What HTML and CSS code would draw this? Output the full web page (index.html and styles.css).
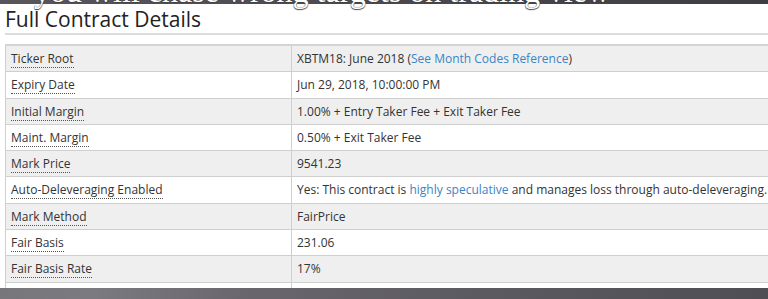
FILE: index.html
```html
<!DOCTYPE html>
<html lang="en">
<head>
    <meta charset="UTF-8">
    <meta name="viewport" content="width=device-width, initial-scale=1.0">
    <title>Full Contract Details</title>
    <link rel="stylesheet" href="styles.css">
</head>
<body>

<div class="banner">
    <span class="banner-text">you will chase wrong targets on trading view</span>
</div>

<div class="content">
    <h2 class="section-title">Full Contract Details</h2>

    <table class="details">
        <tr>
            <td class="key"><span class="hint">Ticker Root</span></td>
            <td>XBTM18: June 2018 (<a href="#">See Month Codes Reference</a>)</td>
        </tr>
        <tr>
            <td class="key"><span class="hint">Expiry Date</span></td>
            <td>Jun 29, 2018, 10:00:00 PM</td>
        </tr>
        <tr>
            <td class="key"><span class="hint">Initial Margin</span></td>
            <td>1.00% + Entry Taker Fee + Exit Taker Fee</td>
        </tr>
        <tr>
            <td class="key"><span class="hint">Maint. Margin</span></td>
            <td>0.50% + Exit Taker Fee</td>
        </tr>
        <tr>
            <td class="key"><span class="hint">Mark Price</span></td>
            <td>9541.23</td>
        </tr>
        <tr>
            <td class="key"><span class="hint">Auto-Deleveraging Enabled</span></td>
            <td>Yes: This contract is <a href="#">highly speculative</a> and manages loss through auto-deleveraging.</td>
        </tr>
        <tr>
            <td class="key"><span class="hint">Mark Method</span></td>
            <td>FairPrice</td>
        </tr>
        <tr>
            <td class="key"><span class="hint">Fair Basis</span></td>
            <td>231.06</td>
        </tr>
        <tr>
            <td class="key"><span class="hint">Fair Basis Rate</span></td>
            <td>17%</td>
        </tr>
        <tr>
            <td class="key"><span class="hint">Fair Basis Calculation</span></td>
            <td>Based on 30-day annualised rate</td>
        </tr>
    </table>
</div>

<div class="footer-bar"></div>

</body>
</html>
```

FILE: styles.css
```css
html, body {
    margin: 0;
    padding: 0;
    overflow: hidden;
    background-color: #fff;
}
body {
    font-family: "Open Sans", Arial, sans-serif;
    color: #333;
}
.banner {
    display: flow-root;
    height: 4px;
    background: linear-gradient(to right, #58565c, #3e3d42);
    position: relative;
    z-index: 2;
}
.banner-text {
    display: block;
    margin-top: -25px;
    padding-left: 34px;
    font-family: "Liberation Serif", serif;
    font-size: 32px;
    line-height: 32px;
    color: #fff;
    white-space: nowrap;
    text-shadow: 0 0 1px #444, 0 1px 1px #444;
}
.content {
    padding-left: 5px;
}
.section-title {
    margin: 0;
    padding-top: 2px;
    font-size: 21px;
    font-weight: normal;
    line-height: 27px;
    color: #222;
    border-bottom: 2px solid #dcdcdc;
}
.details {
    margin-top: 9px;
    width: 1000px;
    border-collapse: collapse;
    font-size: 12px;
    border-top: 2px solid #d4d4d4;
}
.details td {
    border: 1px solid #cfcfcf;
    padding: 4px 5px;
    line-height: 17.3px;
    white-space: nowrap;
}
.details tr:nth-child(odd) td {
    background-color: #efefef;
}
.details .key {
    width: 275px;
}
.hint {
    border-bottom: 1px dotted #555;
}
.details a {
    color: #3a85c6;
    text-decoration: none;
}
.footer-bar {
    position: fixed;
    left: 0;
    right: 0;
    bottom: 0;
    height: 11px;
    background: linear-gradient(100deg, #77767b 0%, #7b7a80 12%, #69676d 32%, #5c5b61 60%, #4f4e54 100%);
}
```
